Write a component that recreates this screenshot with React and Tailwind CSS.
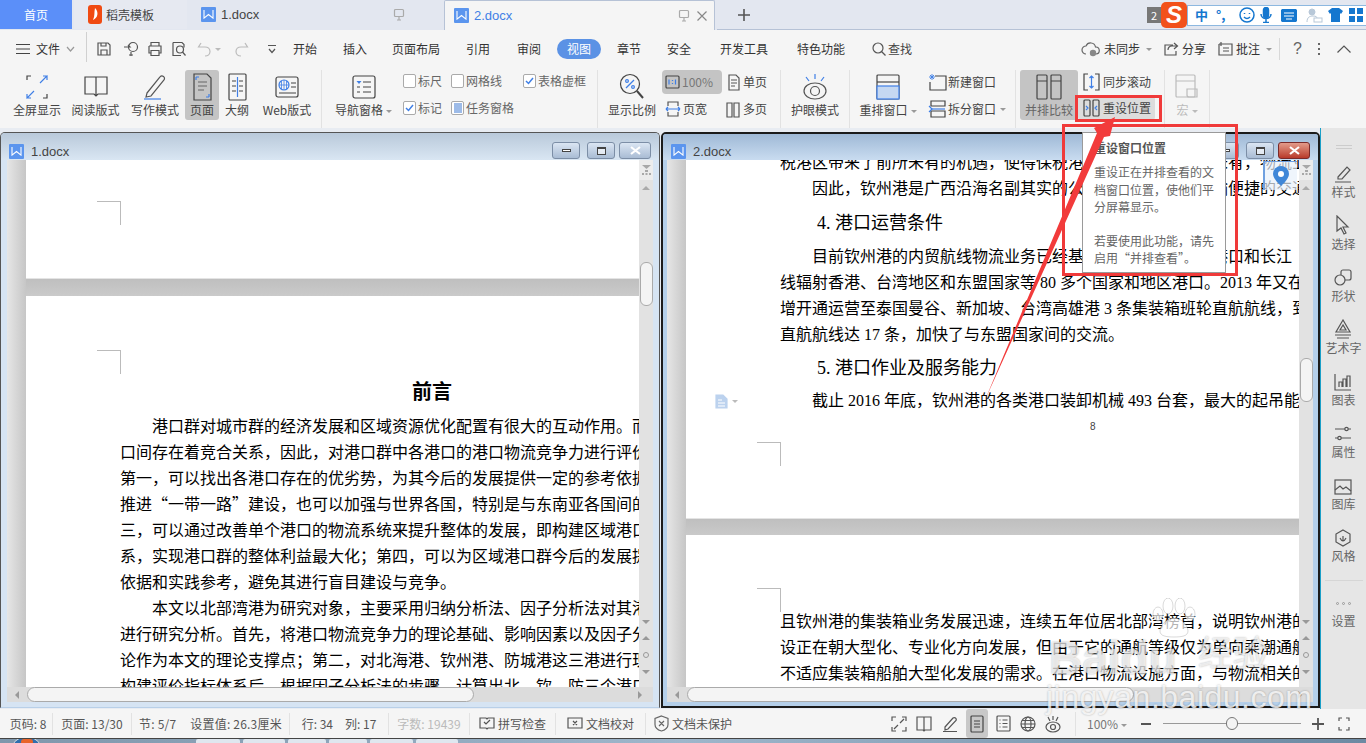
import React from "react";

const UI = "font-['Noto_Sans_CJK_SC','Noto_Sans',sans-serif]";
const DOC = "font-['Liberation_Serif','Noto_Sans_CJK_SC',serif]";

const I = ({ w = 24, h = 24, c = "#444", sw = 1.2, children }) => (
  <svg width={w} height={h} viewBox={`0 0 ${w} ${h}`} fill="none" stroke={c} strokeWidth={sw} className="shrink-0">{children}</svg>
);

const WLogo = ({ size = 16 }) => (
  <span className="flex items-center justify-center bg-[#5b95ee] shrink-0 rounded-[1px]" style={{ width: size, height: size }}>
    <svg width={size - 4} height={size - 6} viewBox="0 0 12 10" fill="none" stroke="#fff" strokeWidth="1.2"><path d="M1 0 L1 9 L6 5 L11 9 L11 0" /></svg>
  </span>
);

const Monitor = () => (
  <I w={12} h={13} c="#aaa"><rect x="1.5" y="1.5" width="9" height="7" rx="1" /><path d="M6 9v3M4 12h4" /></I>
);

function Tabs() {
  return (
    <div className={`h-[30px] flex bg-[#e3e7f0] gap-[2px] shrink-0 ${UI}`}>
      <div className="w-[72px] h-[29px] bg-[#5b8ff9] text-white text-[12px] flex items-center justify-center">首页</div>
      <div className="w-[113px] h-[29px] bg-[#e6e9f1] flex items-center pl-[14px] gap-[4px] text-[12px] text-[#444]">
        <svg width="14" height="19" viewBox="0 0 14 19"><path d="M3 0h8a3 3 0 0 1 3 3v13a3 3 0 0 1-3 3H3a3 3 0 0 1-3-3V3a3 3 0 0 1 3-3z" fill="#f04a12" /><path d="M7 3 C11 7 10 13 5 15 C7 11 6 7 7 3z" fill="#fff" /></svg>
        稻壳模板
      </div>
      <div className="w-[253px] h-[29px] bg-[#e3e7f0] flex items-center pl-[12px] text-[13px] text-[#444]">
        <WLogo size={15} /><span className="ml-[5px] font-['Liberation_Sans']">1.docx</span>
        <span className="ml-auto mr-[37px]"><Monitor /></span>
      </div>
      <div className="w-[271px] h-[30px] bg-[#f5f5f5] border border-b-0 border-[#b6c2d6] rounded-t-[2px] flex items-center pl-[9px] text-[13px] text-[#3f7fe6]">
        <WLogo size={15} /><span className="ml-[5px] font-['Liberation_Sans']">2.docx</span>
        <span className="ml-auto mr-[6px]"><Monitor /></span>
        <I w={12} h={12} c="#888"><path d="M1.5 1.5l9 9M10.5 1.5l-9 9" /></I>
        <span className="w-[6px]" />
      </div>
      <div className="flex-1 border-b border-[#b6c2d6] h-[30px] flex items-center pl-[20px]">
        <I w={14} h={14} c="#555" sw={1.6}><path d="M7 1v12M1 7h12" /></I>
      </div>
    </div>
  );
}

const QIcon = ({ children, w = 16 }) => <I w={w} h={16} c="#555">{children}</I>;
const Caret = ({ c = "#999" }) => <i className="inline-block ml-[3px] w-0 h-0 border-x-[3px] border-t-[3px] border-x-transparent align-middle" style={{ borderTopColor: c }} />;

function MenuRow() {
  const tabs = [["开始", 50], ["插入", 50], ["页面布局", 72], ["引用", 52], ["审阅", 50], ["视图", 50, true], ["章节", 50], ["安全", 50], ["开发工具", 80], ["特色功能", 74]];
  return (
    <div className={`h-[34px] pt-[4px] flex items-center bg-[#f5f5f5] text-[12px] text-[#333] shrink-0 ${UI}`}>
      <div className="ml-[16px] flex items-center gap-[6px] w-[70px]">
        <I w={14} h={12} c="#444"><path d="M0 1.5h14M0 6h14M0 10.5h14" /></I>
        <span>文件</span>
        <I w={9} h={6} c="#999"><path d="M1 1l3.5 4L8 1" /></I>
      </div>
      <div className="w-px h-[30px] bg-[#d0d0d0] -mt-[4px]" />
      <div className="ml-[9px] flex items-center gap-[8px] w-[184px]">
        <QIcon><path d="M2 2h10l2 2v10H2zM5 14V9h6v5M5 2v3h5V2" /></QIcon>
        <span className="ml-[3px]"><QIcon><circle cx="10" cy="6" r="4.5" /><path d="M1 6h6l-2-2M8 11v4M6 14h4" /></QIcon></span>
        <QIcon><path d="M4 5V1.5h8V5M2 5h12v7h-2M4 12H2V5M4 9.5h8v5H4z" /></QIcon>
        <QIcon><path d="M2 1.5h9l2 2v3M2 1.5v13h8" /><circle cx="9" cy="8.5" r="3.5" /><path d="M11.5 11l3 3.5" /></QIcon>
        <span className="flex items-center gap-[2px] ml-[2px]"><QIcon><path d="M4 2L1.5 6H8c3 0 5 2 5 4.5S11 15 8 15" stroke="#bbb" /></QIcon><i className="border-x-[3px] border-t-[3px] border-x-transparent border-t-[#bbb]" /></span>
        <span className="ml-[4px]"><QIcon><path d="M12 2l2.5 4H8c-3 0-5 2-5 4.5S5 15 8 15" stroke="#bbb" /></QIcon></span>
        <span className="ml-[10px]"><I w={10} h={10} c="#555"><path d="M1 1.5h8M2 5l3 3.5L8 5" /></I></span>
      </div>
      <div className="flex-1 flex items-center">
        {tabs.map(([t, w, a]) => (
          <span key={t} style={{ width: w }} className="flex justify-center shrink-0">
            <span className={a ? "bg-[#5b92e5] text-white rounded-full w-[44px] text-center h-[20px] leading-[20px]" : ""}>{t}</span>
          </span>
        ))}
        <span className="flex items-center ml-[14px] gap-[2px] text-[#444]">
          <I w={14} h={14} c="#555"><circle cx="6" cy="6" r="5" /><path d="M9.5 9.5l4 4" /></I>查找
        </span>
        <span className="ml-auto flex items-center gap-[3px]">
          <I w={20} h={16} c="#666"><path d="M5 13a4 4 0 0 1 0-8 5 5 0 0 1 9.5 1A3.5 3.5 0 0 1 15 13" /><circle cx="12" cy="12" r="3.2" fill="#888" stroke="none" /></I>未同步<Caret />
          <span className="w-[5px]" />
          <I w={16} h={16} c="#555"><path d="M11 2l3.5 3-3.5 3M14 5H9c-3 0-4 2-4 4M10 4H2v10h11v-4" /></I>分享
          <span className="w-[5px]" />
          <I w={16} h={16} c="#555"><path d="M2 3v11h13V3H6M4 1v4M2 3h4M6 7h6M6 10h6" /></I>批注<Caret />
        </span>
        <span className="w-px h-[22px] bg-[#d8d8d8] ml-[7px]" />
        <span className="ml-[13px] text-[16px] text-[#666] font-['Liberation_Sans']">?</span>
        <span className="ml-[16px] flex flex-col gap-[3px]"><b className="w-[2px] h-[2px] bg-[#666]" /><b className="w-[2px] h-[2px] bg-[#666]" /><b className="w-[2px] h-[2px] bg-[#666]" /></span>
        <span className="ml-[17px] mr-[15px]"><I w={14} h={8} c="#555"><path d="M0.5 7.5L7 1l6.5 6.5" /></I></span>
      </div>
    </div>
  );
}

const Big = ({ w, label, children, active, caret }) => (
  <div style={{ width: w }} className={`h-[50px] flex flex-col items-center justify-between shrink-0 whitespace-nowrap text-[12px] text-[#444] ${active ? "bg-[#c4c4c4] rounded-[3px]" : ""}`}>
    <div className="h-[32px] pt-[2px] flex items-center justify-center">{children}</div>
    <div className="leading-[16px] h-[18px]">{label}{caret && <Caret />}</div>
  </div>
);
const Sep = () => <div className="w-px h-[60px] bg-[#e2e2e2] shrink-0" />;
const Box = ({ checked, fill }) => (
  <span className="w-[13px] h-[14px] border border-[#aaa] rounded-[2px] bg-white flex items-center justify-center shrink-0">
    {checked && <svg width="9" height="8" viewBox="0 0 9 8" fill="none" stroke="#3f7fe6" strokeWidth="1.5"><path d="M1 4l2.5 2.5L8 1" /></svg>}
    {fill && <span className="w-[8px] h-[10px] bg-[#9dbbe8]" />}
  </span>
);
const Chk = ({ label, checked, fill, w }) => (
  <span style={{ width: w }} className="flex items-center gap-[2px] text-[12px] text-[#666] whitespace-nowrap"><Box checked={checked} fill={fill} />{label}</span>
);

function Ribbon() {
  return (
    <div className={`h-[64px] flex bg-[#f5f5f5] pt-[6px] shrink-0 ${UI} items-start`}>
      <div className="pl-[12px] flex items-start">
        <Big w={50} label="全屏显示">
          <I w={22} h={24} c="#3f7fe6"><path d="M1 5V1h4" stroke="#444" /><path d="M21 5V1h-4L21 1 14 8" /><path d="M1 19v4h4L1 23l7-7" /><path d="M21 19v4h-4" stroke="#444" /></I>
        </Big>
        <span className="w-[8px]" />
        <Big w={51} label="阅读版式">
          <I w={24} h={22} c="#444"><path d="M1 1h22v17H14l-2 2-2-2H1zM12 1v19" /></I>
        </Big>
        <span className="w-[10px]" />
        <Big w={48} label="写作模式">
          <I w={24} h={26} c="#555"><path d="M4 19L17 3a2.5 2.5 0 0 1 4 3L8 22l-5 1z" /><path d="M1 25h17" stroke="#3f7fe6" /></I>
        </Big>
        <span className="w-[6px]" />
        <Big w={34} label="页面" active>
          <I w={19} h={28} c="#444"><path d="M1 1h13l4 4v22H1z" /><path d="M5 9h9M5 13h9M5 17h6" stroke="#666" /><path d="M3 4v3M3 4h3M16 24v-3M16 24h-3" stroke="#3f7fe6" /></I>
        </Big>
        <span className="w-[1px]" />
        <Big w={34} label="大纲">
          <I w={19} h={28} c="#444"><rect x="1" y="1" width="17" height="26" rx="1" /><path d="M9.5 4v20" stroke="#3f7fe6" /><path d="M4 8h4M4 13h4M4 18h4M11 8h4M11 13h4M11 18h4" /></I>
        </Big>
        <span className="w-[6px]" />
        <Big w={54} label="Web版式">
          <I w={24} h={22} c="#444"><rect x="1" y="1" width="22" height="20" rx="2" /><circle cx="9" cy="9" r="5" stroke="#3f7fe6" /><path d="M4 9h10M9 4v10M6.5 5v8M11.5 5v8" stroke="#3f7fe6" strokeWidth="0.8" /><path d="M16 7h5M16 11h5M4 17h17" /></I>
        </Big>
      </div>
      <span className="w-[7px]" /><Sep />
      <span className="w-[9px]" />
      <Big w={65} label="导航窗格" caret>
        <I w={24} h={24} c="#444"><rect x="1" y="1" width="22" height="22" rx="2" /><path d="M4.5 6h5l-2.5 3z" fill="#3f7fe6" stroke="none" /><path d="M11 7h8M11 12h8M11 17h8M5 12h3M5 17h3" /></I>
      </Big>
      <div className="ml-[7px] w-[193px] flex flex-col gap-[11px] pt-[3px]">
        <div className="flex h-[16px]"><Chk label="标尺" w={48} /><Chk label="网格线" w={72} /><Chk label="表格虚框" checked /></div>
        <div className="flex h-[16px]"><Chk label="标记" checked w={48} /><Chk label="任务窗格" fill /></div>
      </div>
      <span className="w-[1px]" /><Sep />
      <span className="w-[9px]" />
      <Big w={50} label="显示比例">
        <I w={26} h={28} c="#444"><circle cx="11" cy="11" r="9.5" /><path d="M18 18l6 7" strokeWidth="2" /><path d="M7 15l8-8" stroke="#3f7fe6" /><circle cx="8" cy="8" r="1.4" stroke="#3f7fe6" /><circle cx="14" cy="14" r="1.4" stroke="#3f7fe6" /></I>
      </Big>
      <div className="ml-[5px] w-[105px] flex flex-col gap-[3px] text-[12px] text-[#444] whitespace-nowrap">
        <div className="flex h-[24px] items-center">
          <span className="w-[60px] h-[24px] bg-[#c4c4c4] rounded-[4px] flex items-center pl-[3px] gap-[2px] text-[#777] shrink-0">
            <I w={15} h={14} c="#444"><rect x="1" y="1" width="13" height="12" rx="1" /><path d="M4 4.5v5M7.5 5v1M7.5 8v1M10.5 4.5v5" stroke="#3f7fe6" /></I>100%
          </span>
          <span className="ml-[6px] flex items-center gap-[3px] shrink-0"><I w={12} h={17} c="#555"><path d="M1 1h7l3 3v12H1zM3 6h6M3 9h6M3 12h4" /></I>单页</span>
        </div>
        <div className="flex h-[24px] items-center">
          <span className="w-[60px] flex items-center gap-[2px] pl-[3px] shrink-0"><I w={16} h={16} c="#555"><path d="M3 5V1h10v4M3 11v4h10v-4" /><path d="M1 8h14M1 8l2-2M1 8l2 2M15 8l-2-2M15 8l-2 2" stroke="#3f7fe6" /></I>页宽</span>
          <span className="ml-[4px] flex items-center gap-[3px] shrink-0"><I w={14} h={17} c="#555"><path d="M1 2h5v14H1zM8 2h5v14H8z" /></I>多页</span>
        </div>
      </div>
      <span className="w-[13px]" /><Sep />
      <Big w={68} label="护眼模式">
        <I w={26} h={28} c="#555"><ellipse cx="13" cy="18" rx="11" ry="8" /><circle cx="13" cy="18" r="4.5" /><path d="M13 1v5M4 4l3 4M22 4l-3 4" stroke="#3f7fe6" /></I>
      </Big><Sep />
      <Big w={76} label="重排窗口" caret>
        <I w={24} h={26} c="#444"><rect x="1" y="1" width="22" height="24" rx="1" /><path d="M1 8h22" /><rect x="1" y="12" width="22" height="13" fill="#c5d8f2" stroke="#3f7fe6" /></I>
      </Big>
      <div className="ml-[2px] w-[87px] flex flex-col gap-[7px] pt-[2px] text-[12px] text-[#444] whitespace-nowrap">
        <span className="flex items-center gap-[1px] h-[20px]"><I w={19} h={18} c="#444"><path d="M7 3h11v14H2V9" /><path d="M4 1v6M1 4h6M2 2l4 4M6 2L2 6" stroke="#3f7fe6" strokeWidth="0.9" /></I>新建窗口</span>
        <span className="flex items-center gap-[1px] h-[20px]"><I w={19} h={18} c="#444"><path d="M3 1h14v5H3zM3 11h14v6H3z" /><path d="M1 6l3 3-3 3" stroke="#3f7fe6" /><path d="M3 9h14" stroke="#3f7fe6" /></I>拆分窗口<Caret /></span>
      </div>
      <Sep /><span className="w-[4px]" />
      <div className="w-[58px] h-[50px] bg-[#c4c4c4] rounded-[3px] flex flex-col items-center justify-between text-[12px] text-[#666] shrink-0">
        <div className="pt-[4px]"><I w={26} h={26} c="#444"><rect x="1" y="1" width="10" height="24" rx="1" /><rect x="15" y="1" width="10" height="24" rx="1" /><path d="M1 7h10M15 7h10" /></I></div>
        <span className="leading-[16px] h-[18px]">并排比较</span>
      </div>
      <div className="w-[79px] flex flex-col gap-[3px] text-[12px] text-[#444] whitespace-nowrap">
        <span className="h-[24px] pl-[5px] flex items-center gap-[3px]"><I w={17} h={18} c="#444"><path d="M5 1H1v16h4M12 1h4v16h-4" /><path d="M8.5 3v12M6.5 5l2-2 2 2M6.5 13l2 2 2-2" stroke="#3f7fe6" /></I>同步滚动</span>
        <span className="h-[24px] w-[77px] pl-[5px] bg-[#dcdcdc] rounded-[3px] flex items-center gap-[3px] -mt-[1px]"><I w={17} h={18} c="#444"><rect x="1" y="1" width="6" height="16" rx="1" /><rect x="10" y="1" width="6" height="16" rx="1" /><path d="M3 7l2 2-2 2M14 7l-2 2 2 2" stroke="#3f7fe6" /></I>重设位置</span>
      </div>
      <span className="w-[7px]" /><Sep />
      <div className="w-[44px] h-[50px] flex flex-col items-center justify-between text-[12px] text-[#bbb] shrink-0">
        <div className="pt-[4px]"><I w={24} h={26} c="#bbb"><rect x="1" y="1" width="19" height="22" rx="1" /><path d="M1 7h19M12 15h10v8h-8a2 2 0 0 1-2-2z" /></I></div>
        <span className="leading-[16px] h-[18px]">宏<Caret c="#bbb" /></span>
      </div><Sep />
    </div>
  );
}

const Crop = () => <div className="w-[24px] h-[24px] border-t border-r border-[#bbb]" />;

const Line = ({ indent = 0, children, h = 26, cls = "" }) => (
  <div style={{ paddingLeft: indent, height: h, lineHeight: `${h}px` }} className={`whitespace-nowrap text-[16px] text-black ${cls}`}>{children}</div>
);

const Band = () => <div className="h-[18px] bg-gradient-to-b from-[#bfbfbf] to-[#cacaca] border-t border-[#e4e4e4] shrink-0" />;

const VScroll = ({ top }) => (
  <div className="w-[14px] bg-[#e2e2e2] flex flex-col items-center shrink-0">
    <div className="w-full h-[20px] bg-[#ececec] flex justify-center pt-[5px] shrink-0">
      <svg width="9" height="11" viewBox="0 0 9 11" fill="#a8a8a8"><path d="M0 0h9L4.5 4z" /><rect x="3" y="5" width="3" height="2" /><rect y="8" width="2" height="2" /><rect x="3.5" y="8" width="2" height="2" /><rect x="7" y="8" width="2" height="2" /></svg>
    </div>
    <i className="mt-[6px] w-0 h-0 border-x-[4px] border-b-[4px] border-x-transparent border-b-[#aaa]" />
    <div style={{ marginTop: top }} className="w-[13px] h-[44px] bg-[#f4f4f4] border border-[#aaa] rounded-[6px]" />
    <div className="mt-auto mb-[13px] flex flex-col items-center gap-[12px]">
      <i className="w-0 h-0 border-x-[4px] border-t-[4px] border-x-transparent border-t-[#999]" />
      <i className="w-0 h-0 border-x-[4px] border-b-[4px] border-x-transparent border-b-[#999]" />
      <b className="w-[6px] h-[6px] rounded-full border border-[#999]" />
      <i className="w-0 h-0 border-x-[4px] border-t-[4px] border-x-transparent border-t-[#999]" />
    </div>
  </div>
);

const HScroll = () => (
  <div className="h-[15px] flex bg-[#dcdcdc] shrink-0 items-center">
    <div className="w-[20px] flex justify-center"><i className="w-0 h-0 border-y-[4px] border-r-[4px] border-y-transparent border-r-[#999]" /></div>
    <div className="w-[447px] h-[15px] bg-[#f4f4f4] border border-[#aaa] rounded-[8px]" />
    <div className="ml-auto w-[26px] flex justify-center"><i className="w-0 h-0 border-y-[4px] border-l-[4px] border-y-transparent border-l-[#999]" /></div>
  </div>
);

const WinBtn = ({ w = 28, kind, red }) => (
  <span style={{ width: w }} className={`h-[17px] rounded-[3px] border flex items-center justify-center ${red ? "border-[#7a2a2a] bg-gradient-to-b from-[#e29a8a] to-[#b8382a]" : "border-[#7c8ea6] bg-gradient-to-b from-[#dbe6f3] to-[#a9bcd4]"}`}>
    {kind === "min" && <b className="w-[9px] h-[3px] border border-[#444] bg-white" />}
    {kind === "max" && <b className="w-[9px] h-[8px] border border-[#444] border-t-2 bg-white/60" />}
    {kind === "x" && <svg width="11" height="9" viewBox="0 0 11 9" stroke="#fff" strokeWidth="2.2"><path d="M1 1l9 7M10 1L1 8" /></svg>}
  </span>
);

const Title = ({ name, grad, red, h }) => (
  <div style={{ height: h }} className={`flex items-end pb-[1px] pl-[8px] shrink-0 bg-gradient-to-b ${grad}`}>
    <WLogo size={15} />
    <span className="ml-[7px] text-[13px] leading-[15px] text-[#444] font-['Liberation_Sans']">{name}</span>
    <span className="ml-auto flex gap-[4px] mr-[8px]">
      <span className="mr-[3px]"><WinBtn kind="min" /></span><WinBtn kind="max" /><WinBtn w={32} kind="x" red={red} />
    </span>
  </div>
);

function LeftWindow() {
  const p = [
    [32, "港口群对城市群的经济发展和区域资源优化配置有很大的互动作用。而"],
    [0, "口间存在着竞合关系，因此，对港口群中各港口的港口物流竞争力进行评价"],
    [0, "第一，可以找出各港口存在的优劣势，为其今后的发展提供一定的参考依据"],
    [0, "推进“一带一路”建设，也可以加强与世界各国，特别是与东南亚各国间的"],
    [0, "三，可以通过改善单个港口的物流系统来提升整体的发展，即构建区域港口"],
    [0, "系，实现港口群的整体利益最大化；第四，可以为区域港口群今后的发展提"],
    [0, "依据和实践参考，避免其进行盲目建设与竞争。"],
    [32, "本文以北部湾港为研究对象，主要采用归纳分析法、因子分析法对其港"],
    [0, "进行研究分析。首先，将港口物流竞争力的理论基础、影响因素以及因子分"],
    [0, "论作为本文的理论支撑点；第二，对北海港、钦州港、防城港这三港进行现"],
    [0, "构建评价指标体系后，根据因子分析法的步骤，计算出北、钦、防三个港口"],
  ];
  return (
    <div className={`w-[660px] h-[576px] flex flex-col border border-[#555] border-b-[#b8cfe8] rounded-t-[5px] bg-[#d6e4f3] shrink-0 overflow-hidden ${UI}`}>
      <Title name="1.docx" grad="from-[#b9c9da] to-[#d9e6f3]" h={27} />
      <div className="flex-1 flex px-[6px] min-h-0">
        <div className="w-[19px] bg-gradient-to-r from-[#e6e6e6] to-[#c6c6c6] shrink-0" />
        <div className="w-[613px] overflow-hidden flex flex-col">
          <div className="h-[118px] bg-white pl-[71px] pt-[41px] shrink-0"><Crop /></div>
          <Band />
          <div className="flex-1 bg-white pt-[54px] pl-[94px] min-h-0 overflow-hidden">
            <div className="-ml-[23px]"><Crop /></div>
            <div className="h-[38px] -mt-[2px] w-[624px] text-center text-[20px] font-bold leading-[38px] text-black">前言</div>
            <div className="mt-[2px]">
              {p.map(([i, t], k) => <Line key={k} indent={i}>{t}</Line>)}
            </div>
          </div>
        </div>
        <VScroll top={72} />
      </div>
      <div className="px-[6px] pb-[5px]"><HScroll /></div>
    </div>
  );
}

function RightWindow() {
  return (
    <div className={`ml-[1px] w-[659px] h-[576px] flex flex-col border-2 border-[#1b1b1b] rounded-t-[5px] bg-[#b4cfea] shrink-0 overflow-hidden ${UI}`}>
      <Title name="2.docx" grad="from-[#9fb9d6] to-[#c9dcf0]" red h={26} />
      <div className="flex-1 flex pl-[4px] pr-[5px] min-h-0">
        <div className="w-[19px] bg-gradient-to-r from-[#e6e6e6] to-[#c6c6c6] shrink-0" />
        <div className={`w-[613px] overflow-hidden flex flex-col ${DOC}`}>
          <div className="h-[358px] bg-white pl-[94px] shrink-0 overflow-hidden relative">
            <div className="-mt-[10px]">
              <Line>税港区带来了前所未有的机遇，使得保税港区的发展迎来前所未有，物流业务</Line>
              <Line indent={32}>因此，钦州港是广西沿海名副其实的公路铁路水路航空运输便捷的交通枢纽</Line>
              <div className="h-[42px] pl-[37px] flex items-center text-[18px] text-black whitespace-nowrap">4. 港口运营条件</div>
              <Line indent={32}>目前钦州港的内贸航线物流业务已经基本覆盖沿海各主要港口和长江</Line>
              <Line>线辐射香港、台湾地区和东盟国家等 80 多个国家和地区港口。2013 年又在</Line>
              <Line>增开通运营至泰国曼谷、新加坡、台湾高雄港 3 条集装箱班轮直航航线，到</Line>
              <Line>直航航线达 17 条，加快了与东盟国家间的交流。</Line>
              <div className="h-[40px] pl-[37px] flex items-center text-[18px] text-black whitespace-nowrap">5. 港口作业及服务能力</div>
              <Line indent={32}>截止 2016 年底，钦州港的各类港口装卸机械 493 台套，最大的起吊能</Line>
              <div className="h-[28px] leading-[26px] pl-[310px] text-[10px] text-[#444] font-['Liberation_Sans']">8</div>
              <div className="-ml-[23px]"><Crop /></div>
            </div>
            <div className="absolute left-[29px] top-[234px] flex items-center gap-[4px]">
              <I w={13} h={15} c="#bcd2ee"><path d="M1 1h7l4 4v9H1z" fill="#bcd2ee" /><path d="M3 6h4M3 9h7M3 12h7" stroke="#fff" /></I>
              <i className="w-0 h-0 border-x-[3px] border-t-[3px] border-x-transparent border-t-[#bbb]" />
            </div>
            <div className="absolute right-[2px] top-[1px] w-[34px] h-[29px] bg-[#e8f1fb]/70 border-l-2 border-t border-[#6fa0e0] flex justify-center pt-[4px]">
              <svg width="16" height="20" viewBox="0 0 16 20"><path d="M8 0a8 8 0 0 1 8 8c0 5-8 12-8 12S0 13 0 8a8 8 0 0 1 8-8z" fill="#3f87d8" /><circle cx="8" cy="8" r="3" fill="#fff" /></svg>
            </div>
          </div>
          <Band />
          <div className="flex-1 bg-white pl-[94px] overflow-hidden min-h-0 -mt-[1px]">
            <div className="-ml-[23px] mt-[53px]"><Crop /></div>
            <Line cls="-mt-[3px]">且钦州港的集装箱业务发展迅速，连续五年位居北部湾榜首，说明钦州港的</Line>
            <Line>设正在朝大型化、专业化方向发展，但由于它的通航等级仅为单向乘潮通航</Line>
            <Line>不适应集装箱船舶大型化发展的需求。在港口物流设施方面，与物流相关的</Line>
          </div>
        </div>
        <VScroll top={168} />
      </div>
      <div className="px-[4px] pb-[4px] pr-[5px]"><HScroll /></div>
    </div>
  );
}

const SideItem = ({ label, children, mt = 15 }) => (
  <div style={{ marginTop: mt }} className="flex flex-col items-center text-[12px] leading-[16px] text-[#666] whitespace-nowrap">
    <div className="h-[20px] flex items-end mb-[1px]">{children}</div>
    {label}
  </div>
);

function Sidebar() {
  return (
    <div className={`w-[46px] h-[581px] -mt-[4px] bg-[#e6e6e6] border-l border-[#1a9fc8] flex flex-col items-center ${UI}`}>
      <div className="w-[16px] mt-[17px] h-[4px] border-y border-[#ccc]" />
      <SideItem label="样式" mt={14}><I w={18} h={18} c="#555"><path d="M4 12L13 2l3 3-8 9H4zM1 17h16" /></I></SideItem>
      <SideItem label="选择"><I w={14} h={20} c="#555"><path d="M1 1v15l4-3 3 6 2-1-3-6h5z" /></I></SideItem>
      <SideItem label="形状"><I w={18} h={18} c="#555"><rect x="7" y="1" width="10" height="10" rx="2" /><circle cx="6" cy="11" r="5" fill="#e6e6e6" /></I></SideItem>
      <SideItem label="艺术字"><I w={18} h={20} c="#555"><path d="M9 1L2 13h14zM9 6l-3 5h6zM1 16h16M3 19h12" /></I></SideItem>
      <SideItem label="图表"><I w={18} h={18} c="#555"><path d="M1 1v16h16M5 14V9h3v5M9 14V6h3v8M13 14V3h3v11" /></I></SideItem>
      <SideItem label="属性"><I w={18} h={18} c="#555"><path d="M1 4h10M14 4h3M1 13h3M7 13h10" /><circle cx="12.5" cy="4" r="1.7" /><circle cx="5.5" cy="13" r="1.7" /></I></SideItem>
      <SideItem label="图库"><I w={18} h={16} c="#555"><rect x="1" y="1" width="16" height="14" /><path d="M1 11l5-4 3 3 3-2 5 4" /></I></SideItem>
      <SideItem label="风格"><I w={16} h={18} c="#555"><path d="M8 1l7 4v8l-7 4-7-4V5z" /><path d="M8 12V7M5 9c1 2 2 3 3 3 1 0 2-1 3-3" /></I></SideItem>
      <div className="w-[38px] h-px bg-[#d6d6d6] mt-[16px]" />
      <div className="mt-[21px] flex gap-[3px]"><b className="w-[3px] h-[3px] rounded-full border border-[#999]" /><b className="w-[3px] h-[3px] rounded-full border border-[#999]" /><b className="w-[3px] h-[3px] rounded-full border border-[#999]" /></div>
      <div className="mt-[8px] text-[12px] leading-[16px] text-[#666]">设置</div>
    </div>
  );
}

const Stat = ({ w, children, sep = true, c = "text-[#555]" }) => (
  <span style={{ width: w }} className={`h-[22px] flex items-center justify-center whitespace-nowrap shrink-0 ${c} ${sep ? "border-r border-[#e2e2e2]" : ""}`}>{children}</span>
);

function StatusBar() {
  return (
    <div className={`h-[29px] bg-[#f5f5f5] flex items-center text-[12px] shrink-0 ${UI}`}>
      <span className="w-[4px]" />
      <Stat w={49}>页码: 8</Stat>
      <Stat w={79}>页面: 13/30</Stat>
      <Stat w={158}><span className="flex gap-[14px] tracking-[0.2px]"><span>节: 5/7</span><span>设置值: 26.3厘米</span></span></Stat>
      <Stat w={99}><span className="flex gap-[12px]"><span>行: 34</span><span>列: 17</span></span></Stat>
      <Stat w={81} c="text-[#bbb]">字数: 19439</Stat>
      <Stat w={86}><I w={16} h={15} c="#555"><path d="M1 2h6l1 1 1-1h6v10H9l-1 1-1-1H1zM5 6l2 2 4-4" /></I><span className="ml-[3px]">拼写检查</span></Stat>
      <Stat w={90}><I w={16} h={15} c="#555"><path d="M1 2h14v10H1zM6 5l4 4M10 5L6 9" /></I><span className="ml-[3px]">文档校对</span></Stat>
      <span className="ml-[8px] flex items-center gap-[3px] text-[#555] whitespace-nowrap"><I w={15} h={17} c="#666"><path d="M7.5 1L14 3.5v6c0 3-3 5.5-6.5 6.5C4 15 1 12.5 1 9.5v-6zM5 6l5 5M10 6l-5 5" /></I>文档未保护</span>
      <span className="ml-auto flex items-center mr-[16px]">
        <I w={16} h={16} c="#555"><path d="M1 5V1h4M11 1h4v4M1 11v4h4M15 11v4h-4M3 13l4-4M13 3L9 7" /></I>
        <span className="ml-[9px]"><I w={16} h={16} c="#555"><path d="M1 1h14v13H9l-1 1-1-1H1zM8 1v14" /></I></span>
        <span className="ml-[10px]"><I w={16} h={16} c="#555"><path d="M3 11L11 2a2 2 0 0 1 3 2.5L6 13l-3 1zM1 15.5h14" /></I></span>
        <span className="ml-[8px] w-[22px] h-[29px] bg-[#c8c8c8] rounded-[3px] flex items-center justify-center"><I w={14} h={18} c="#444"><rect x="1" y="1" width="12" height="16" rx="1" /><path d="M4 6h6M4 9h6M4 12h6" /></I></span>
        <span className="ml-[8px]"><I w={15} h={17} c="#555"><rect x="1" y="1" width="13" height="15" rx="1" /><path d="M3.5 5h1M6.5 5h5M3.5 8.5h1M6.5 8.5h5M3.5 12h1M6.5 12h5" /></I></span>
        <span className="ml-[9px]"><I w={16} h={16} c="#555"><circle cx="8" cy="8" r="7" /><ellipse cx="8" cy="8" rx="3" ry="7" /><path d="M1 8h14M2 4.5h12M2 11.5h12" /></I></span>
        <span className="ml-[9px]"><I w={16} h={19} c="#555"><ellipse cx="8" cy="13" rx="7" ry="5" /><circle cx="8" cy="13" r="2.5" /><path d="M8 2v4M3 3l2 4M13 3l-2 4" /></I></span>
        <span className="w-px h-[24px] bg-[#e2e2e2] ml-[14px]" />
        <span className="ml-[11px] text-[#777] w-[42px] whitespace-nowrap">100%<Caret /></span>
        <span className="ml-[12px] w-[10px] h-[2px] bg-[#555]" />
        <span className="ml-[12px] w-[138px] h-px bg-[#999] relative"><b className="absolute left-[63px] -top-[6px] w-[12px] h-[13px] rounded-full bg-[#f4f4f4] border border-[#777]" /></span>
        <span className="ml-[11px]"><I w={12} h={12} c="#555" sw={1.8}><path d="M6 0v12M0 6h12" /></I></span>
        <span className="ml-[14px]"><I w={12} h={14} c="#555"><path d="M1 4V1h3M8 1h3v3M1 10v3h3M11 10v3H8" /></I></span>
      </span>
    </div>
  );
}

function Taskbar() {
  const btns = [44, 42, 38, 38, 43, 42];
  return (
    <div className="h-[5px] flex bg-gradient-to-r from-[#7f97ac] via-[#9eb6cb] to-[#6d8aa3] shrink-0 relative overflow-hidden border-t border-[#444]">
      <div className="absolute left-[10px] top-[-3px] w-[33px] h-[33px] rounded-full bg-[#2f6fae] border border-[#ddd] flex justify-center pt-[2px]"><b className="w-[12px] h-[6px] rounded-full bg-[#e8642a]" /></div>
      <span className="w-[196px]" />
      {btns.map((w, i) => <span key={i} style={{ width: w }} className="mr-[3px] h-full bg-[#dfe7ef] rounded-t-[2px]" />)}
    </div>
  );
}

const Overlays = () => (
  <>
    <div className={`absolute left-[1082px] top-[132px] w-[144px] h-[141px] bg-white border border-[#9a9a9a] text-[12px] leading-[17.5px] text-[#666] pl-[11px] whitespace-nowrap ${UI}`}>
      <div className="font-bold text-[#555] mt-[6px] mb-[6px] leading-[18px]">重设窗口位置</div>
      <div>重设正在并排查看的文</div>
      <div>档窗口位置，使他们平</div>
      <div>分屏幕显示。</div>
      <div className="mt-[16px]">若要使用此功能，请先</div>
      <div>启用“并排查看”。</div>
    </div>
    <div className="absolute left-[1062px] top-[124px] w-[176px] h-[152px] border-[3px] border-[#f03a3a]" />
    <div className="absolute left-[1075px] top-[95px] w-[87px] h-[27px] border-[3px] border-[#f03a3a]" />
    <svg className="absolute left-[970px] top-[105px]" width="170" height="300" viewBox="0 0 170 300">
      <path d="M15 295 L127 28 L124 23 L145 12 L140 31 L134 32 Z" fill="#f23b3b" />
    </svg>
    <div className={`absolute right-0 top-0 h-[30px] w-[219px] flex items-center ${UI}`}>
      <span className="w-[14px] h-[16px] bg-[#777] text-white text-[11px] leading-[16px] text-center">2</span>
      <span className="w-[26px] h-[26px] bg-[#f2511b] rounded-[5px] text-white text-[24px] font-bold leading-[25px] text-center font-['Liberation_Sans'] italic">S</span>
      <span className="flex-1 h-[21px] bg-white border border-[#8db8e0] border-r-0 flex items-center text-[#1577cf] font-bold text-[13px] pl-[7px]">
        <span className="w-[18px]">中</span>
        <span className="w-[26px] pl-[3px]">°,</span>
        <span className="w-[18px]"><I w={16} h={16} c="#1577cf" sw={1.5}><circle cx="8" cy="8" r="7" /><path d="M5 10c2 2 4 2 6 0M5.5 6v1M10.5 6v1" /></I></span>
        <span className="w-[24px] pl-[3px]"><I w={12} h={16} c="#1577cf" sw={1.5}><rect x="3.5" y="0.5" width="5" height="10" rx="2.5" fill="#1577cf" /><path d="M1 7c0 6 10 6 10 0M6 12v4M3 15.5h6" /></I></span>
        <span className="w-[25px]"><I w={16} h={13} c="#1577cf"><rect x="0.5" y="0.5" width="15" height="12" rx="1.5" fill="#1577cf" /><path d="M3 4h10M3 7h10M5 10h6" stroke="#fff" /></I></span>
        <span className="w-[22px]"><I w={17} h={15} c="#b8c8d8" sw={1}><circle cx="6" cy="4" r="3" fill="#b8c8d8" /><path d="M1 14c0-5 3-6 6-6s4 1 4 2" /><rect x="8" y="10" width="8" height="4" /></I></span>
        <span className="w-[21px]"><svg width="15" height="14" viewBox="0 0 15 14"><path d="M4 0h7l4 3-2 3-1-1v9H3V5L2 6 0 3z" fill="#1577cf" /></svg></span>
        <span><svg width="14" height="14" viewBox="0 0 14 14" fill="#1577cf"><rect width="6" height="6" /><rect x="8" width="6" height="6" /><rect y="8" width="6" height="6" /><rect x="8" y="8" width="6" height="6" /></svg></span>
      </span>
    </div>
    <div className="absolute left-[1049px] top-[632px] text-[46px] leading-[52px] text-white/70 font-['Liberation_Sans'] font-bold [text-shadow:0_0_2px_rgba(0,0,0,0.3)]">Baidu</div>
    <svg className="absolute left-[1148px] top-[598px]" width="48" height="40" viewBox="0 0 48 40" fill="#fff" fillOpacity="0.7" stroke="#000" strokeOpacity="0.15"><ellipse cx="10" cy="16" rx="5" ry="7" /><ellipse cx="20" cy="8" rx="5" ry="8" /><ellipse cx="32" cy="8" rx="5" ry="8" /><ellipse cx="42" cy="16" rx="5" ry="7" /><path d="M26 20c8 0 14 8 14 13s-6 6-14 6-14-1-14-6 6-13 14-13z" /></svg>
    <div className={`absolute left-[1198px] top-[628px] text-[35px] leading-[46px] text-white/70 [text-shadow:0_0_2px_rgba(0,0,0,0.3)] ${UI}`}>经验</div>
    <div className="absolute left-[1046px] top-[680px] text-[32px] leading-[34px] text-white/80 font-['Liberation_Sans'] tracking-[0.5px] [text-shadow:0_0_2px_rgba(0,0,0,0.3)]">jingyan.baidu.com</div>
  </>
);

export default function App() {
  return (
    <div className="relative w-[1366px] h-[743px] overflow-hidden bg-[#f0f0f0] flex flex-col">
      <Tabs />
      <MenuRow />
      <Ribbon />
      <div className="h-[581px] pt-[4px] flex bg-[#e8ecf2] shrink-0">
        <LeftWindow />
        <RightWindow />
        <Sidebar />
      </div>
      <StatusBar />
      <Taskbar />
      <Overlays />
    </div>
  );
}
